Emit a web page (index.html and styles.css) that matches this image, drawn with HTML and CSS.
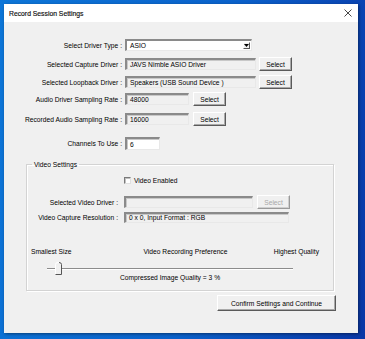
FILE: index.html
```html
<!DOCTYPE html>
<html>
<head>
<meta charset="utf-8">
<link rel="stylesheet" href="styles.css">
</head>
<body>
<div class="window">
  <div class="titlebar">
    <span class="title">Record Session Settings</span>
    <svg class="close" width="8" height="8" viewBox="0 0 8 8"><path d="M0.5 0.5L7.5 7.5M7.5 0.5L0.5 7.5" stroke="#333" stroke-width="0.9" fill="none"/></svg>
  </div>
  <div class="content">
    <div class="form">
      <div class="row row-combo">
        <span class="label">Select Driver Type :</span>
        <div class="combo"><span class="combo-text">ASIO</span><span class="combo-btn"><svg width="5" height="3" viewBox="0 0 5 3"><path d="M0 0H5L2.5 3Z" fill="#000"/></svg></span></div>
      </div>
      <div class="row row-capture">
        <span class="label">Selected Capture Driver :</span>
        <div class="field w-long">JAVS Nimble ASIO Driver</div>
        <button class="btn">Select</button>
      </div>
      <div class="row row-loop">
        <span class="label">Selected Loopback Driver :</span>
        <div class="field w-long">Speakers (USB Sound Device )</div>
        <button class="btn">Select</button>
      </div>
      <div class="row row-audio">
        <span class="label">Audio Driver Sampling Rate :</span>
        <div class="field w-short">48000</div>
        <button class="btn">Select</button>
      </div>
      <div class="row row-rec">
        <span class="label">Recorded Audio Sampling Rate :</span>
        <div class="field w-short">16000</div>
        <button class="btn">Select</button>
      </div>
      <div class="row row-chan">
        <span class="label">Channels To Use :</span>
        <div class="field white w-chan">6</div>
      </div>
    </div>
    <fieldset class="group">
      <legend>Video Settings</legend>
      <div class="vrow vrow-check">
        <span></span>
        <div class="check"><span class="box"></span><span>Video Enabled</span></div>
      </div>
      <div class="vrow vrow-driver">
        <span class="label">Selected Video Driver :</span>
        <div class="vfield-wrap">
          <div class="field w-vdrv"></div>
          <button class="btn disabled">Select</button>
        </div>
      </div>
      <div class="vrow vrow-res">
        <span class="label">Video Capture Resolution :</span>
        <div class="field w-res">0 x 0, Input Format : RGB</div>
      </div>
      <div class="slider-labels">
        <span>Smallest Size</span>
        <span class="mid">Video Recording Preference</span>
        <span class="right">Highest Quality</span>
      </div>
      <div class="slider">
        <div class="track"></div>
        <svg class="thumb" width="7" height="13" viewBox="0 0 7 13">
          <path d="M0.5 12.5V2.5Q0.5 0.5 3 0.5H4Q6.5 0.5 6.5 2.5V12.5Z" fill="#f0f0f0"/>
          <path d="M0.5 12.5V2.5Q0.5 0.5 3 0.5H4" stroke="#ffffff" stroke-width="1" fill="none"/>
          <path d="M4 0.5Q6.5 0.5 6.5 2.5V12.5H0.5" stroke="#555" stroke-width="1" fill="none"/>
        </svg>
      </div>
      <div class="quality">Compressed Image Quality = 3 %</div>
    </fieldset>
    <div class="footer">
      <button class="btn confirm">Confirm Settings and Continue</button>
    </div>
  </div>
</div>
</body>
</html>
```

FILE: styles.css
```css
html, body {
  margin: 0;
  padding: 0;
}
body {
  width: 365px;
  height: 339px;
  overflow: hidden;
  background: linear-gradient(100deg, #0d76d8 0%, #0b62cb 55%, #0a40af 90%, #0a37a6 100%);
  font-family: "Liberation Sans", Arial, sans-serif;
  font-size: 6.7px;
  color: #000;
  padding-top: 4px;
  padding-left: 4px;
  box-sizing: border-box;
}
.window {
  width: 354px;
  height: 329px;
  background: #f0f0f0;
  box-shadow: 1px 1px 3px rgba(0, 0, 0, 0.45);
  display: flex;
  flex-direction: column;
}
.titlebar {
  height: 18px;
  background: #ffffff;
  display: flex;
  align-items: center;
  justify-content: space-between;
  padding: 0 6px 0 5px;
  flex: none;
}
.title {
  font-size: 6.8px;
  -webkit-text-stroke: 0.15px #000;
  color: #111;
}
.content {
  flex: 1;
  display: flex;
  flex-direction: column;
  padding-top: 17px;
}
.form {
  display: flex;
  flex-direction: column;
}
.row {
  display: grid;
  grid-template-columns: 118px auto auto;
  column-gap: 3px;
  align-items: center;
  height: 14px;
  justify-content: start;
}
.label {
  text-align: right;
  white-space: nowrap;
}
.row-combo { height: 12px; }
.row-capture { margin-top: 6px; }
.row-loop { margin-top: 4px; }
.row-audio { margin-top: 3px; }
.row-audio .btn, .row-rec .btn { margin-left: 1px; }
.row-rec { margin-top: 6px; }
.row-chan { margin-top: 11px; height: 13px; }

.field {
  box-sizing: border-box;
  height: 12px;
  background: #f0f0f0;
  border-style: solid;
  border-width: 2px 1px 1px 2px;
  border-color: #8a8a8a #e8e8e8 #e8e8e8 #8a8a8a;
  box-shadow: inset 1px 1px 0 #c8c8c8;
  padding: 0 3px;
  display: flex;
  align-items: center;
  white-space: nowrap;
  overflow: hidden;
}
.field.white { background: #ffffff; }
.w-long { width: 131px; }
.w-short { width: 64px; }
.w-chan { width: 35px; height: 13px; }

.combo {
  box-sizing: border-box;
  width: 127px;
  height: 12px;
  background: #ffffff;
  border-style: solid;
  border-width: 2px 1px 1px 2px;
  border-color: #8a8a8a #e8e8e8 #e8e8e8 #8a8a8a;
  display: flex;
  align-items: center;
  justify-content: space-between;
  padding: 0 1px 0 3px;
}
.combo-btn {
  box-sizing: border-box;
  width: 7px;
  height: 7px;
  background: #f0f0f0;
  border-style: solid;
  border-width: 1px;
  border-color: #ffffff #555 #555 #ffffff;
  display: flex;
  align-items: center;
  justify-content: center;
}

.btn {
  box-sizing: border-box;
  font: inherit;
  color: #000;
  width: 33px;
  height: 14px;
  padding: 0;
  margin: 0;
  background: #f0f0f0;
  border-style: solid;
  border-width: 1px;
  border-color: #ffffff #5a5a5a #5a5a5a #ffffff;
  box-shadow: inset -1px -1px 0 #a9a9a9;
  display: flex;
  align-items: center;
  justify-content: center;
}
.btn.disabled {
  color: #a8a8a8;
  border-color: #ffffff #9a9a9a #9a9a9a #ffffff;
  box-shadow: inset -1px -1px 0 #cfcfcf;
}

.group {
  margin: 11px 24px 0 22px;
  padding: 0;
  border: 1px solid #d3d3d3;
  box-shadow: inset 1px 1px 0 #ffffff, 1px 1px 0 #ffffff;
  height: 130px;
  box-sizing: border-box;
  min-width: 0;
  display: flex;
  flex-direction: column;
}
.group legend {
  margin-left: 5px;
  padding: 0 2px;
}
.vrow {
  display: grid;
  grid-template-columns: 91px auto;
  column-gap: 6px;
  align-items: center;
  justify-content: start;
}
.vrow-check {
  margin-top: 8px;
  height: 9px;
}
.check {
  display: flex;
  align-items: center;
  gap: 3px;
}
.box {
  box-sizing: border-box;
  width: 7px;
  height: 7px;
  background: #ffffff;
  border-style: solid;
  border-width: 1px;
  border-color: #7a7a7a #e0e0e0 #e0e0e0 #7a7a7a;
  box-shadow: inset 1px 1px 0 #c0c0c0;
}
.vrow-driver {
  margin-top: 10px;
  height: 14px;
}
.vfield-wrap {
  display: flex;
  align-items: center;
  gap: 4px;
}
.w-vdrv { width: 129px; }
.vrow-res {
  margin-top: 2px;
  height: 12px;
}
.w-res { width: 165px; height: 11px; }

.slider-labels {
  margin-top: 24px;
  display: flex;
  padding-left: 4px;
  padding-right: 14px;
  height: 8px;
  align-items: center;
  white-space: nowrap;
}
.slider-labels .mid { margin-left: 72px; }
.slider-labels .right { margin-left: auto; }

.slider {
  margin: 7px 0 0 20px;
  width: 246px;
  height: 13px;
  display: flex;
  align-items: center;
}
.track {
  width: 246px;
  height: 1px;
  background: #8c8c8c;
  border-bottom: 1px solid #ffffff;
  margin-top: 1px;
  flex: none;
}
.thumb {
  margin-left: -238px;
  flex: none;
}
.quality {
  text-align: center;
  padding-right: 20px;
  margin-top: -1px;
  height: 8px;
  line-height: 8px;
}

.footer {
  display: flex;
  justify-content: flex-end;
  padding-right: 22px;
  margin-top: 4px;
}
.btn.confirm {
  width: 119px;
  height: 16px;
}
```
